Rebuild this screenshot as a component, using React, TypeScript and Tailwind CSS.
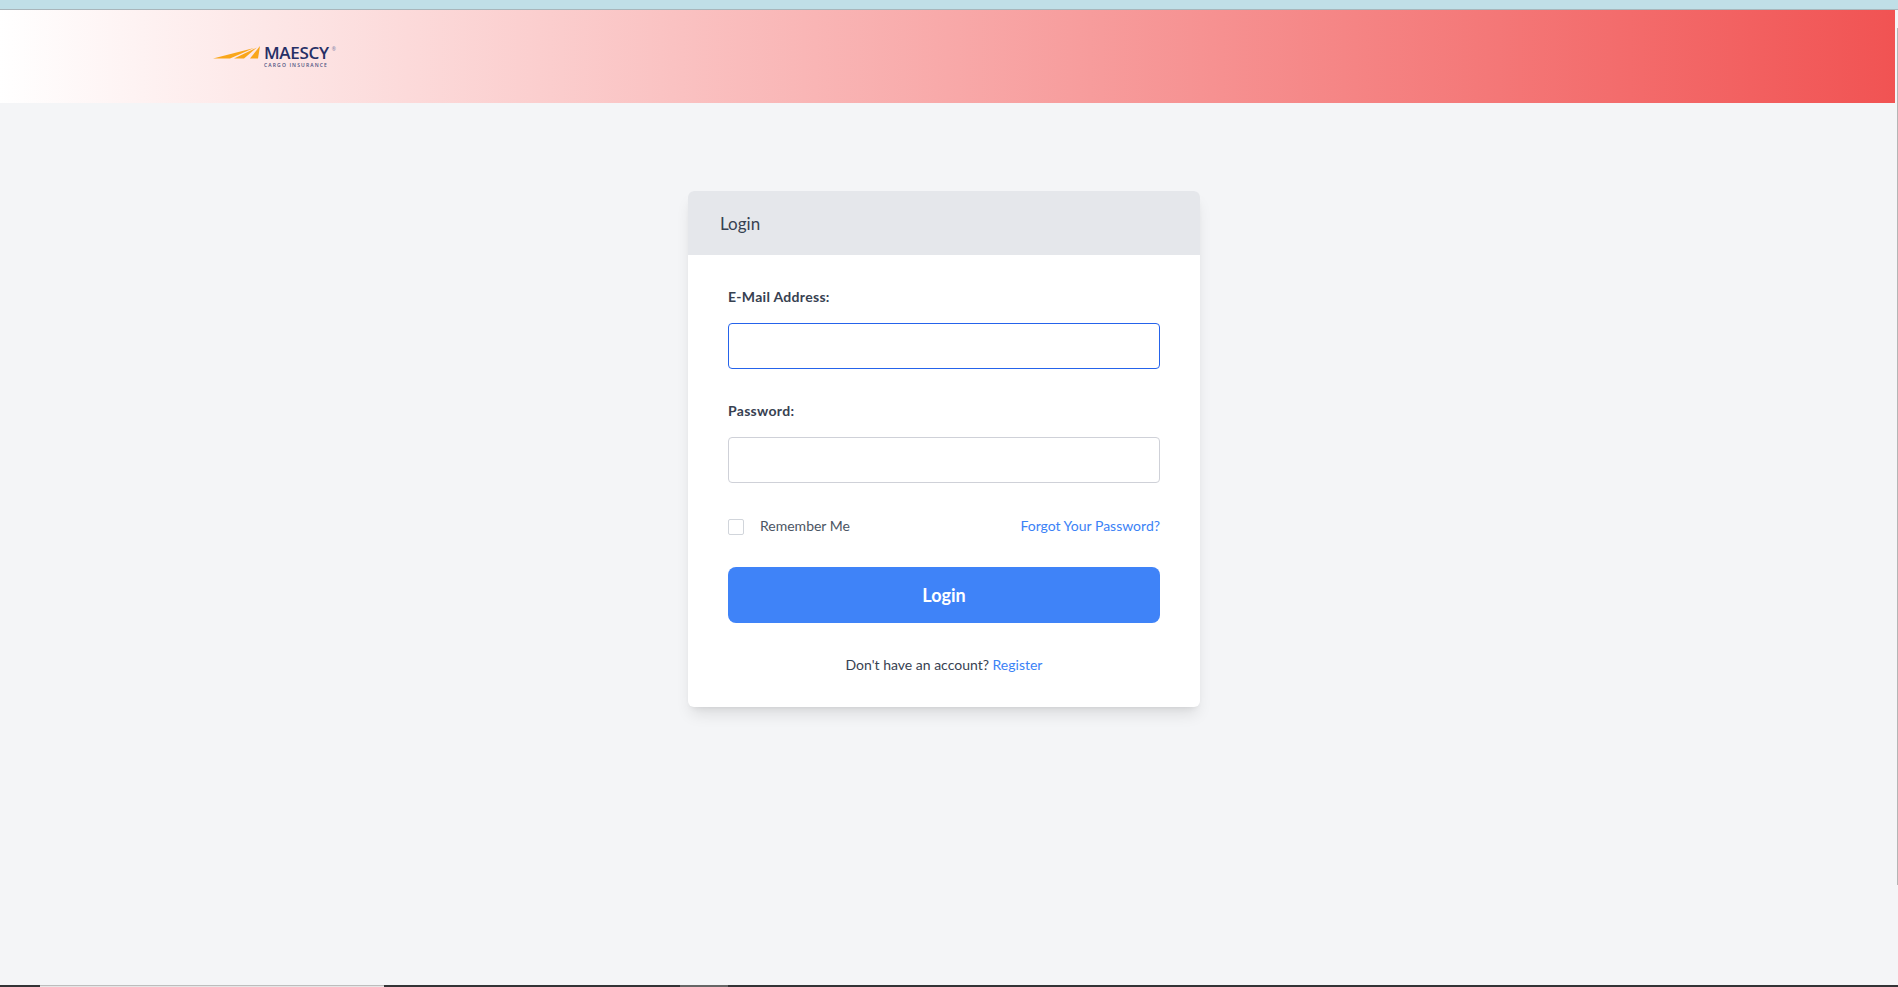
const sans = 'font-["Lato","Noto_Sans",sans-serif]';

function Logo() {
  return (
    <div className="flex items-start gap-[4px] mt-[2px]">
      <svg width="47" height="13" viewBox="0 0 47 13">
        <path d="M0 12.6 L41 2 L17 12.6 Z" fill="#f9a61a" />
        <path d="M21 12.6 L44 1.5 L31 12.6 Z" fill="#f9a61a" />
        <path d="M37 12.6 L47 0 L45 12.6 Z" fill="#f9a61a" />
      </svg>
      <div className="flex flex-col items-start">
        <div className="flex items-start">
          <span className="text-[17px] leading-[14px] font-semibold text-[#262f66] font-['Open_Sans',sans-serif] tracking-[-0.3px]">MAESCY</span>
          <span className="text-[5px] leading-[6px] text-[#7a7fa5] ml-[3px] font-['Open_Sans',sans-serif]">®</span>
        </div>
        <span className="mt-[2px] text-[5px] leading-[7px] font-semibold tracking-[1.15px] text-[#4a5080] font-['Open_Sans',sans-serif]">CARGO INSURANCE</span>
      </div>
    </div>
  );
}

export default function App() {
  return (
    <div className={`h-screen overflow-hidden flex flex-col bg-[#f4f5f7] ${sans}`}>
      <div className="h-[10px] shrink-0 bg-[#c0dfe7] border-b border-[#a9b5ba]" />

      <div className="flex-1 min-h-0 flex">
        <div className="flex-1 min-w-0">
          <header className="h-[93px] flex items-center pl-[213px] bg-linear-to-r/srgb from-white to-[#f15353]">
            <Logo />
          </header>

          <main className="flex justify-center pt-[88px] pr-[7px]">
            <div className="w-[512px] bg-white rounded-md shadow-lg overflow-hidden">
              <div className="h-[64px] flex items-center px-[32px] pt-[1px] bg-[#e5e7eb] text-[#374151] text-[17px]">Login</div>

              <form className="px-[40px] pt-[32px] pb-[32px]">
                <label className="block text-[14px] leading-[20px] font-bold tracking-[0.3px] text-[#374151] mb-[16px]">E-Mail Address:</label>
                <input className="block w-full h-[46px] bg-white rounded border border-[#2563eb] outline-none mb-[32px]" />

                <label className="block text-[14px] leading-[20px] font-bold tracking-[0.3px] text-[#374151] mb-[16px]">Password:</label>
                <input type="password" className="block w-full h-[46px] bg-white rounded border border-[#cfd1d8] outline-none mb-[32px]" />

                <div className="flex items-center justify-between h-[20px] mb-[32px]">
                  <label className="flex items-center text-[14px] text-[#4b5563]">
                    <span className="w-[16px] h-[16px] bg-white rounded-[2px] border border-[#d1d5db] mr-[16px] mt-[3px]" />
                    Remember Me
                  </label>
                  <a className="text-[14px] text-[#3b82f6]">Forgot Your Password?</a>
                </div>

                <button type="button" className="block w-full h-[56px] rounded-lg bg-[#3f83f8] text-white font-bold text-[18px]">Login</button>

                <p className="mt-[32px] text-center text-[14px] leading-[20px] text-[#374151]">
                  Don't have an account? <a className="text-[#3b82f6]">Register</a>
                </p>
              </form>
            </div>
          </main>
        </div>

        {/* strip of the browser's scrollbar */}
        <div className="w-[3px] shrink-0 flex justify-end pt-[18px] pb-[100px]">
          <div className="w-[1px] h-full bg-[#b5b5b5]" />
        </div>
      </div>

      <div className="h-[2px] shrink-0 flex bg-[#333436]">
        <div className="w-[40px]" />
        <div className="w-[344px] bg-[#e6e6e6] border-t border-[#bdbdbd]" />
        <div className="w-[296px]" />
        <div className="w-[48px] bg-[#666]" />
      </div>
    </div>
  );
}
